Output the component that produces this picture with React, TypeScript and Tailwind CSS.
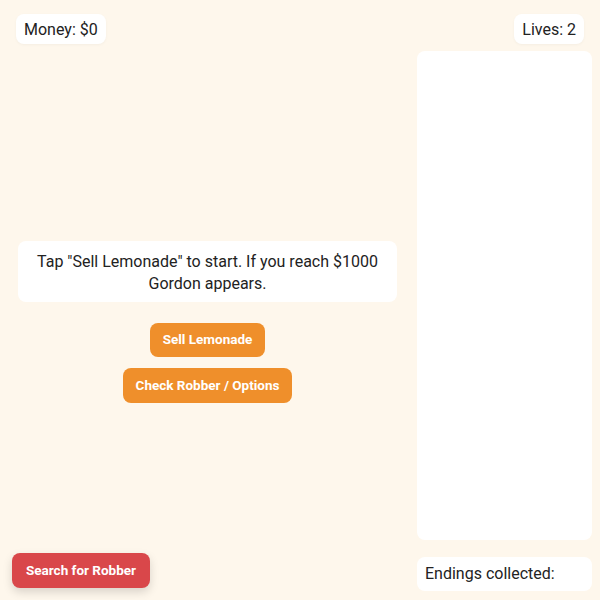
export default function App() {
  return (
    <div className="relative h-[600px] w-[600px] overflow-hidden bg-[#fef7ec] font-['Roboto',sans-serif] text-[#222]">
      <div className="flex items-start justify-between px-4 pt-[14px]">
        <div className="rounded-lg bg-white px-2 pb-[4px] pt-[6px] text-base leading-5 shadow-[0_1px_3px_rgba(0,0,0,0.04)]">Money: $0</div>
        <div className="rounded-lg bg-white px-2 pb-[4px] pt-[6px] text-base leading-5 shadow-[0_1px_3px_rgba(0,0,0,0.04)]">Lives: 2</div>
      </div>

      <div className="mt-[7px] flex h-[541px] pl-[18px] pr-2">
        <div className="flex w-[379px] flex-col items-center justify-center">
          <div className="w-full rounded-lg bg-white px-4 pb-[7px] pt-[10px] text-center text-base leading-[22px]">
            Tap "Sell Lemonade" to start. If you reach $1000 Gordon appears.
          </div>
          <button className="mt-[21px] h-[34px] rounded-lg bg-[#ef8f2b] px-[13px] text-[13.5px] font-bold text-white">
            Sell Lemonade
          </button>
          <button className="mt-[11px] h-[35px] rounded-lg bg-[#ef8f2b] px-[13px] text-[13.5px] font-bold text-white">
            Check Robber / Options
          </button>
        </div>

        <div className="ml-auto flex w-[175px] flex-col">
          <div className="h-[489px] rounded-lg bg-white" />
          <div className="mt-[17px] rounded-lg bg-white px-2 py-[7px] text-base leading-5">Endings collected:</div>
        </div>
      </div>

      <button className="absolute bottom-[12px] left-[12px] h-[35px] w-[138px] rounded-lg bg-[#d9474a] text-[13.5px] font-bold text-white shadow-[0_4px_10px_rgba(0,0,0,0.15)]">
        Search for Robber
      </button>
    </div>
  )
}
